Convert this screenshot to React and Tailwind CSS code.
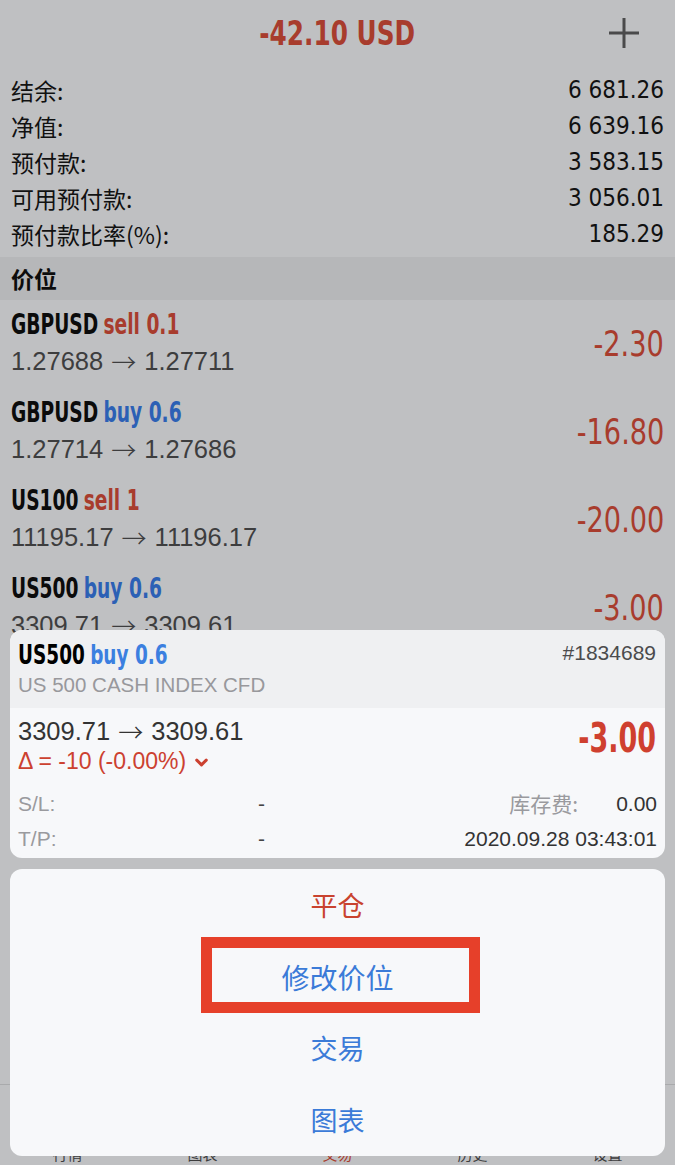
import React from "react";
import { ChevronDown } from "lucide-react";

const COND = { fontFamily: '"DejaVu Sans Condensed", "DejaVu Sans", "Noto Sans CJK SC", sans-serif' };
const SANS = { fontFamily: '"Liberation Sans", "Noto Sans CJK SC", sans-serif' };
const ARROW = { fontFamily: '"Noto Sans CJK SC", sans-serif' };
const CJK = { fontFamily: '"Noto Sans CJK SC", "Liberation Sans", sans-serif' };

const account = [
  ["结余:", "6 681.26"],
  ["净值:", "6 639.16"],
  ["预付款:", "3 583.15"],
  ["可用预付款:", "3 056.01"],
  ["预付款比率(%):", "185.29"],
];

const positions = [
  { sym: "GBPUSD", side: "sell", vol: "0.1", from: "1.27688", to: "1.27711", pl: "-2.30" },
  { sym: "GBPUSD", side: "buy", vol: "0.6", from: "1.27714", to: "1.27686", pl: "-16.80" },
  { sym: "US100", side: "sell", vol: "1", from: "11195.17", to: "11196.17", pl: "-20.00" },
  { sym: "US500", side: "buy", vol: "0.6", from: "3309.71", to: "3309.61", pl: "-3.00" },
];

const tabs = ["行情", "图表", "交易", "历史", "设置"];

function Arrow() {
  return (
    <span style={ARROW} className="mx-[8px] text-[25px] leading-none font-light">→</span>
  );
}

export default function App() {
  return (
    <div className="relative w-[675px] h-[1165px] overflow-hidden bg-[#bfc0c2] flex flex-col">
      {/* header */}
      <div className="h-[66px] grid grid-cols-[1fr_auto_1fr] items-center px-[11px]">
        <div />
        <div style={COND} className="text-[34px] font-bold text-[#a83c2d] origin-center scale-x-[0.81]">-42.10 USD</div>
        <div className="flex justify-end pr-[25px]">
          <svg width="30" height="30" viewBox="0 0 30 30">
            <path d="M15 0V30M0 15H30" stroke="#4a4a4b" strokeWidth="3" />
          </svg>
        </div>
      </div>

      {/* account */}
      <div className="pt-[6px] pb-[5px] px-[11px]">
        {account.map(([k, v]) => (
          <div key={k} className="h-[36px] flex items-center justify-between">
            <span style={CJK} className="text-[23px] text-[#111]">{k}</span>
            <span style={COND} className="text-[24px] text-[#111]">{v}</span>
          </div>
        ))}
      </div>

      {/* section band */}
      <div className="h-[43px] bg-[#b6b7b9] flex items-center px-[11px]">
        <span style={CJK} className="text-[23px] font-bold text-[#0c0c0c]">价位</span>
      </div>

      {/* positions */}
      <div className="px-[11px]">
        {positions.map((p, i) => (
          <div key={i} className="h-[88px] flex items-center justify-between">
            <div className="flex flex-col">
              <div style={COND} className="h-[30px] flex items-center text-[28px] font-bold text-[#0b0b0b] gap-[7px] origin-left scale-x-[0.74]">
                <span>{p.sym}</span>
                <span className={p.side === "sell" ? "text-[#a83c2d]" : "text-[#2c60b5]"}>{p.side} {p.vol}</span>
              </div>
              <div style={SANS} className="mt-[5px] h-[34px] flex items-center text-[25.5px] text-[#3d3d3e]">
                {p.from}<Arrow />{p.to}
              </div>
            </div>
            <div style={COND} className="text-[36px] text-[#a83c2d] origin-right scale-x-[0.84]">{p.pl}</div>
          </div>
        ))}
      </div>

      <div className="flex-1" />

      {/* tab bar */}
      <div className="h-[81px] border-t border-[#a9aaac] grid grid-cols-5 pt-[60px]">
        {tabs.map((t) => (
          <div key={t} style={CJK} className={`text-center text-[15px] leading-[18px] ${t === "交易" ? "text-[#a83c2d]" : "text-[#3d3d3e]"}`}>{t}</div>
        ))}
      </div>

      {/* overlay: detail card + action sheet */}
      <div className="absolute left-0 right-0 top-[630px] px-[10px] flex flex-col gap-[11px]">
        <div className="rounded-[12px] overflow-hidden bg-[#f7f8fa]">
          <div className="h-[78px] bg-[#eff0f2] px-[8px] pt-[10px] flex justify-between">
            <div className="flex flex-col">
              <div style={COND} className="h-[30px] flex items-center gap-[7px] text-[27px] font-bold text-black origin-left scale-x-[0.76]">
                <span>US500</span>
                <span className="text-[#3b7fe0]">buy 0.6</span>
              </div>
              <div style={SANS} className="mt-[2px] text-[20.5px] leading-[26px] text-[#98989c]">US 500 CASH INDEX CFD</div>
            </div>
            <div style={SANS} className="text-[21px] leading-[26px] text-[#4b4b4d] pr-[1px]">#1834689</div>
          </div>
          <div className="h-[150px] px-[8px] pt-[8px]">
            <div className="flex justify-between items-start">
              <div className="flex flex-col">
                <div style={SANS} className="h-[30px] flex items-center text-[25.5px] text-[#333]">
                  3309.71<Arrow />3309.61
                </div>
                <div style={SANS} className="h-[30px] flex items-center text-[23px] text-[#cc4130]">
                  Δ = -10 (-0.00%)
                  <ChevronDown size={19} strokeWidth={3.75} className="ml-[6px] mt-[2px]" />
                </div>
              </div>
              <div style={COND} className="text-[40px] font-bold text-[#cf402f] leading-[44px] pr-[1px] origin-right scale-x-[0.75]">-3.00</div>
            </div>
            <div style={SANS} className="mt-[10px] grid grid-cols-[240px_1fr_auto] text-[21px] leading-[35px]">
              <span className="text-[#9a9a9e]">S/L:</span>
              <span className="text-[#444]">-</span>
              <span className="flex items-center justify-end">
                <span style={CJK} className="text-[#9a9a9e] text-[21px]">库存费:</span>
                <span className="ml-[38px] text-[#333]">0.00</span>
              </span>
              <span className="text-[#9a9a9e]">T/P:</span>
              <span className="text-[#444]">-</span>
              <span className="text-right text-[#333]">2020.09.28 03:43:01</span>
            </div>
          </div>
        </div>

        <div className="rounded-[12px] bg-[#f7f8fa] h-[287px] overflow-hidden flex flex-col">
          <div style={CJK} className="h-[72px] flex items-center justify-center text-[27px] text-[#c9432f]">平仓</div>
          <div className="relative h-[72px] flex items-center justify-center">
            <div className="absolute left-[191px] top-[-4px] w-[279px] h-[76px] border-[11px] border-[#e6402a]" />
            <span style={CJK} className="text-[28px] text-[#3b7bd8]">修改价位</span>
          </div>
          <div style={CJK} className="h-[72px] flex items-center justify-center text-[27px] text-[#3b7bd8]">交易</div>
          <div style={CJK} className="h-[72px] flex items-center justify-center text-[27px] text-[#3b7bd8]">图表</div>
        </div>
      </div>
    </div>
  );
}
